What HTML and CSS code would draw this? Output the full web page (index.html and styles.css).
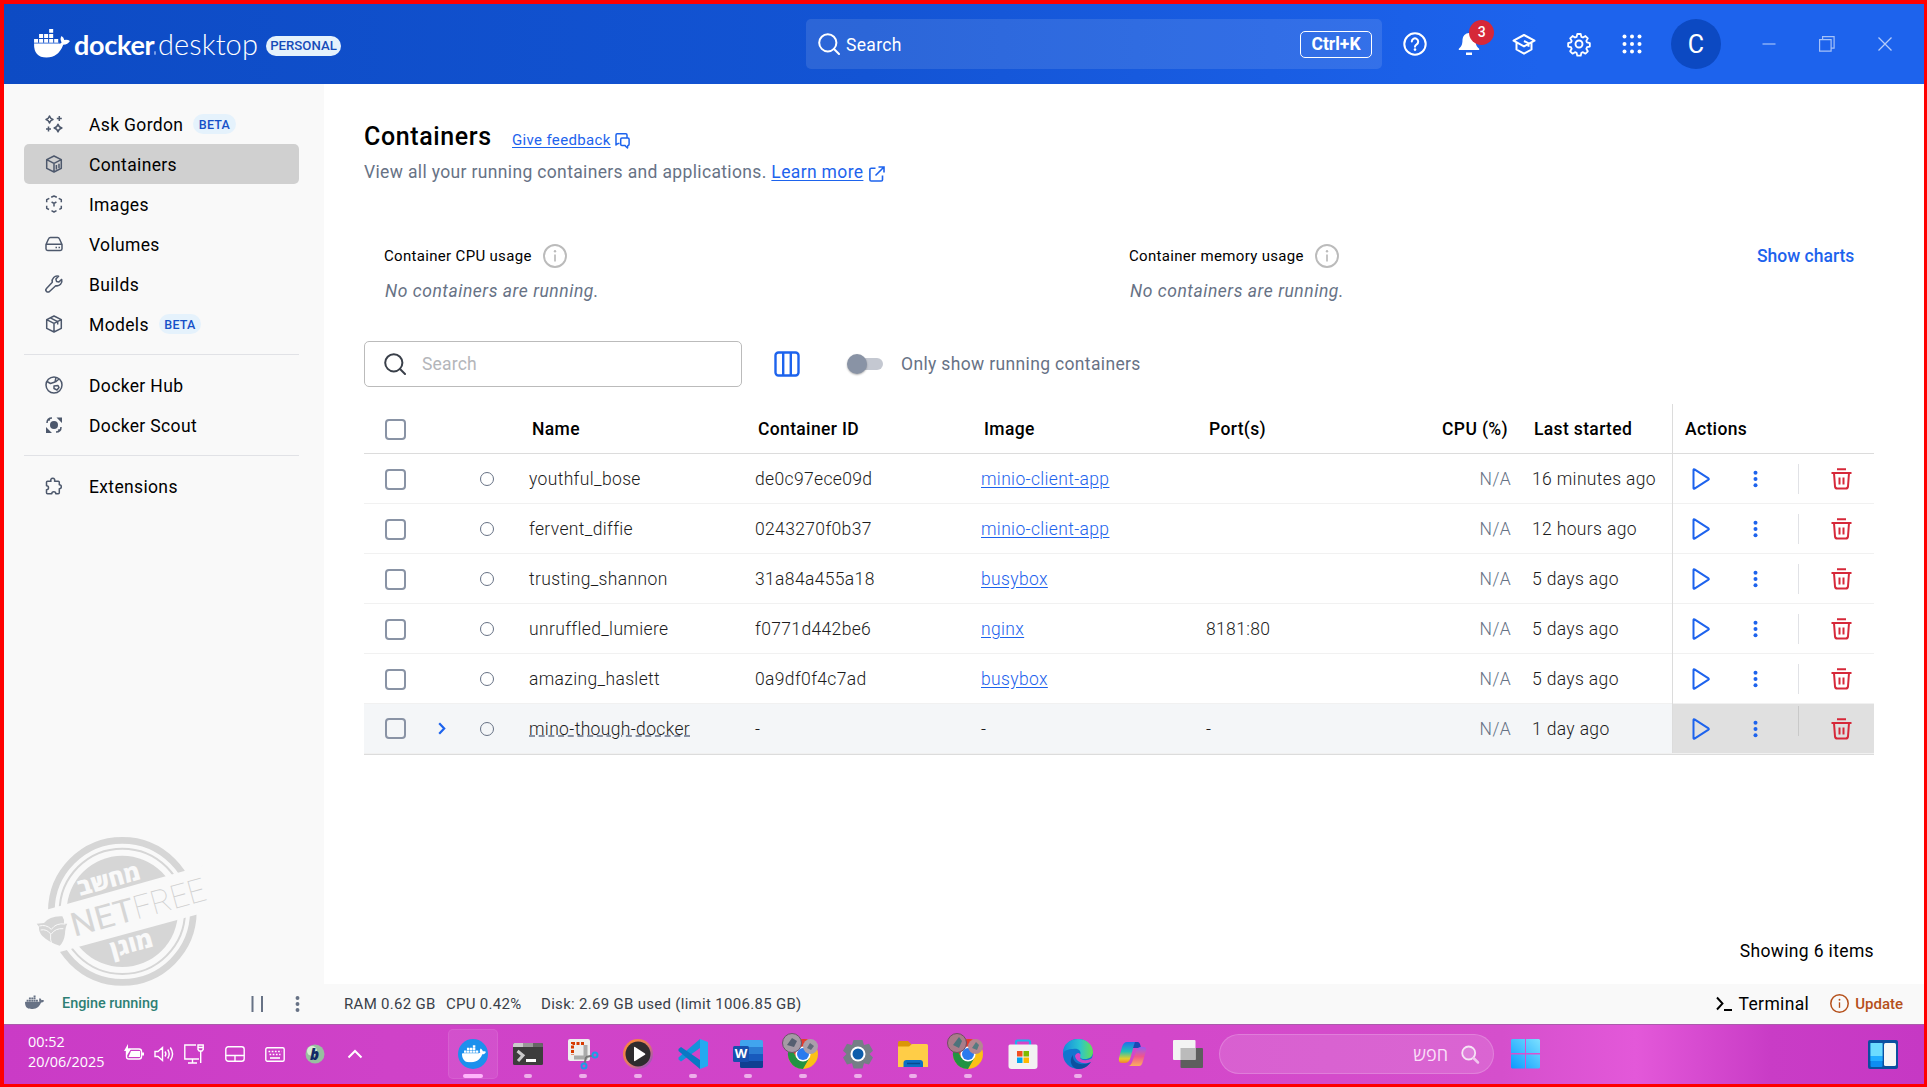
FILE: index.html
```html
<!DOCTYPE html>
<html lang="en">
<head>
<meta charset="utf-8">
<title>Docker Desktop</title>
<link rel="stylesheet" href="styles.css">
</head>
<body>
<svg class="defs" width="0" height="0">
  <defs>
    <symbol id="whale" viewBox="0 3 24 17.5"><path fill="currentColor" d="M13.983 11.078h2.119a.186.186 0 00.186-.185V9.006a.186.186 0 00-.186-.186h-2.119a.185.185 0 00-.185.185v1.888c0 .102.083.185.185.185m-2.954-5.43h2.118a.186.186 0 00.186-.186V3.574a.186.186 0 00-.186-.185h-2.118a.185.185 0 00-.185.185v1.888c0 .102.082.185.185.185m0 2.716h2.118a.187.187 0 00.186-.186V6.29a.186.186 0 00-.186-.185h-2.118a.185.185 0 00-.185.185v1.887c0 .102.082.185.185.186m-2.93 0h2.12a.186.186 0 00.184-.186V6.29a.185.185 0 00-.185-.185H8.1a.185.185 0 00-.185.185v1.887c0 .102.083.185.185.186m-2.964 0h2.119a.186.186 0 00.185-.186V6.29a.185.185 0 00-.185-.185H5.136a.186.186 0 00-.186.185v1.887c0 .102.084.185.186.186m5.893 2.715h2.118a.186.186 0 00.186-.185V9.006a.186.186 0 00-.186-.186h-2.118a.185.185 0 00-.185.185v1.888c0 .102.082.185.185.185m-2.93 0h2.12a.185.185 0 00.184-.185V9.006a.185.185 0 00-.184-.186h-2.12a.185.185 0 00-.184.185v1.888c0 .102.083.185.185.185m-2.964 0h2.119a.185.185 0 00.185-.185V9.006a.185.185 0 00-.184-.186h-2.12a.186.186 0 00-.186.186v1.887c0 .102.084.185.186.185m-2.92 0h2.12a.185.185 0 00.184-.185V9.006a.185.185 0 00-.184-.186h-2.12a.185.185 0 00-.184.185v1.888c0 .102.082.185.185.185M23.763 9.89c-.065-.051-.672-.51-1.954-.51-.338.001-.676.03-1.01.087-.248-1.7-1.653-2.53-1.716-2.566l-.344-.199-.226.327c-.284.438-.49.922-.612 1.43-.23.97-.09 1.882.403 2.661-.595.332-1.55.413-1.744.42H.751a.751.751 0 00-.75.748 11.376 11.376 0 00.692 4.062c.545 1.428 1.355 2.48 2.41 3.124 1.18.723 3.1 1.137 5.275 1.137.983.003 1.963-.086 2.93-.266a12.248 12.248 0 003.823-1.389c.98-.567 1.86-1.288 2.61-2.136 1.252-1.418 1.998-2.997 2.553-4.4h.221c1.372 0 2.215-.549 2.68-1.009.309-.293.55-.65.707-1.046l.098-.288Z"/></symbol>
    <symbol id="info" viewBox="0 0 24 24"><circle cx="12" cy="12" r="11" fill="none" stroke="currentColor" stroke-width="1.9"/><path d="M12 10.5v7" stroke="currentColor" stroke-width="1.7"/><circle cx="12" cy="7.2" r="1.2" fill="currentColor"/></symbol>
    <symbol id="search" viewBox="0 0 22 22"><circle cx="9.8" cy="9.8" r="8.6" fill="none" stroke="currentColor" stroke-width="2"/><path d="M16 16l5 5" stroke="currentColor" stroke-width="2" stroke-linecap="round"/></symbol>
    <symbol id="play" viewBox="0 0 18 22"><path d="M1.5 1.7v18.6q.2.7 1 .3l14-9q.7-.6 0-1.200l-14-9q-.8-.4-1 .3z" fill="none" stroke="currentColor" stroke-width="2" stroke-linejoin="round"/></symbol>
    <symbol id="dots" viewBox="0 0 6 20"><circle cx="3" cy="2.500" r="2.400" fill="currentColor"/><circle cx="3" cy="10" r="2.400" fill="currentColor"/><circle cx="3" cy="17.500" r="2.400" fill="currentColor"/></symbol>
    <symbol id="trash" viewBox="0 0 21 22"><path d="M6 1.200h9M.5 5h20" stroke="currentColor" stroke-width="2"/><path d="M3 5l1 13.500q.3 2 2.300 2h8.400q2 0 2.300-2L18 5M8.500 9.500v7M12.500 9.500v7" fill="none" stroke="currentColor" stroke-width="2"/></symbol>
    <symbol id="chrome" viewBox="0 0 36 36">
      <circle cx="21" cy="21" r="15" fill="#fbc116"/>
      <path d="M21 6a15 15 0 0 1 13 7.500H21z" fill="#e33b2e"/>
      <path d="M8 13.500A15 15 0 0 1 34 13.500H21l-6.500 11.200z" fill="#e33b2e"/>
      <path d="M8 13.500A15 15 0 0 0 21 36l6.500-11.300h-13z" fill="#229342"/>
      <circle cx="21" cy="21" r="7.600" fill="#fff"/><circle cx="21" cy="21" r="6" fill="#2a7bee"/>
    </symbol>
  </defs>
</svg>

<div class="screen">
  <header class="topbar">
    <svg class="logo" viewBox="102 87 107 85" width="36" height="28.500">
      <g fill="#fff"><path d="M147 87h12v11h-12zM117 102h12v12h-12zM132 102h12v12h-12zM147 102h12v12h-12zM102 117h12v11h-12zM117 117h12v11h-12zM132 117h12v11h-12zM147 117h12v11h-12zM162 117h12v11h-12z"/>
      <path d="M102 131h76q5-1 6-4-6-11 0-19 7 4 8 12 10-2 17 3-6 11-20 11-14 38-50 38-38 0-37-41z"/></g>
      <path d="M102 129.500h76" stroke="#9fbcf2" stroke-width="3"/>
    </svg>
    <span class="brand"><b>docker</b><i></i><span>desktop</span></span>
    <span class="plan">PERSONAL</span>
    <div class="global-search">
      <svg width="22" height="22"><use href="#search"/></svg>
      <span>Search</span><kbd>Ctrl+K</kbd>
    </div>
    <nav class="top-icons">
      <svg width="24" height="24" viewBox="0 0 24 24" fill="none" stroke="#fff" stroke-width="2"><circle cx="12" cy="12" r="10.700"/><path d="M8.800 9.600a3.200 3.200 0 1 1 4.900 2.700c-1.200.8-1.700 1.200-1.700 2.400" stroke-linecap="round"/><circle cx="12" cy="17.600" r="1.300" fill="#fff" stroke="none"/></svg>
      <span class="bell"><svg width="22" height="24" viewBox="0 0 22 24" fill="#fff"><path d="M11 1a6.500 6.500 0 0 1 6.500 6.500c0 5.500 1.500 7.500 3.700 9.300v1.200H.8v-1.200C3 15 4.500 13 4.500 7.500A6.500 6.500 0 0 1 11 1zM8 20.500h6v2.500H8z"/></svg><em>3</em></span>
      <svg width="24" height="24" viewBox="0 0 24 24" fill="none" stroke="#fff" stroke-width="2" stroke-linejoin="round"><path d="M1.500 8.700L12 3l10.500 5.700L12 14.400zM4.500 10.600v6.900L12 21.700l7.500-4.200v-7M12 9l4.500 2.300v3.500"/></svg>
      <svg width="24" height="24" viewBox="0 0 24 24" fill="none" stroke="#fff" stroke-width="1.900" stroke-linejoin="round"><path d="M10.200 1.500h3.600l.7 3 1.700.7 2.600-1.600 2.500 2.500-1.600 2.600.7 1.700 3 .7v3.600l-3 .7-.7 1.700 1.600 2.600-2.500 2.500-2.600-1.600-1.700.7-.7 3h-3.600l-.7-3-1.700-.7-2.600 1.600-2.500-2.500 1.600-2.600-.7-1.700-3-.7v-3.600l3-.7.7-1.700-1.600-2.600 2.500-2.500 2.600 1.600 1.700-.7z" transform="translate(.6 .6) scale(.95)"/><circle cx="12" cy="12" r="3.500"/></svg>
      <svg width="20" height="20" viewBox="0 0 20 20" fill="#fff"><circle cx="2.500" cy="2.500" r="2"/><circle cx="10" cy="2.500" r="2"/><circle cx="17.500" cy="2.500" r="2"/><circle cx="2.500" cy="10" r="2"/><circle cx="10" cy="10" r="2"/><circle cx="17.500" cy="10" r="2"/><circle cx="2.500" cy="17.500" r="2"/><circle cx="10" cy="17.500" r="2"/><circle cx="17.500" cy="17.500" r="2"/></svg>
    </nav>
    <span class="avatar">C</span>
    <div class="window-buttons">
      <svg width="14" height="16" viewBox="0 0 14 16"><path d="M.5 8h13" stroke="#a5c1f8" stroke-width="1.200"/></svg>
      <svg width="16" height="16" viewBox="0 0 16 16" fill="none" stroke="#a5c1f8" stroke-width="1.200"><path d="M.6 3.600h11.500v11.500H.6zM3.600 3.600v-3h11.500v11.500h-3"/></svg>
      <svg width="14" height="14" viewBox="0 0 14 14"><path d="M.5.5l13 13M13.500.5l-13 13" stroke="#b5ccfa" stroke-width="1.300"/></svg>
    </div>
  </header>

  <div class="body">
    <aside class="sidebar">
      <a class="item"><svg viewBox="0 0 18 18"><path d="M4.500 1Q5.300 3.700 8 4.500 5.300 5.300 4.500 8 3.700 5.300 1 4.500 3.700 3.700 4.500 1zM13 9.200q.8 3 3.900 3.800-3.100.8-3.900 3.900-.8-3.100-3.900-3.900 3.100-.8 3.900-3.800zM14.300 1v5M11.800 3.500h5M3.500 11.500v5M1 14h5"/></svg>Ask Gordon<span class="beta">BETA</span></a>
      <a class="item active"><svg viewBox="0 0 18 18"><path d="M9 1l7.300 3.700v8.600L9 17l-7.300-3.700V4.700zM1.700 4.700L9 8.400l7.300-3.700M9 8.400V17M11.400 10v4.500M14 8.700v4.500"/></svg>Containers</a>
      <a class="item"><svg viewBox="0 0 18 18"><path d="M6.200 2.300L9 1l2.800 1.300M13.700 3.300l2.600 1.400v2.600M16.300 10.700v2.600l-2 1M11.500 15.700L9 17l-2.500-1.300M4 14.500l-2.300-1.200v-2.600M1.700 7.300V4.700l2.600-1.400M6.600 7L9 8.400 11.400 7M9 8.400v3"/></svg>Images</a>
      <a class="item"><svg viewBox="0 0 18 18"><path d="M1 9.500v4.300q0 1.700 1.700 1.700h12.600q1.700 0 1.700-1.700V9.500l-2.600-5.800q-.5-1.200-1.800-1.200H5.400q-1.300 0-1.800 1.200zM1 9.300h16M10.500 12.500h1.500M13.500 12.500H15"/></svg>Volumes</a>
      <a class="item"><svg viewBox="0 0 18 18"><path d="M13.600 1.300a5 5 0 0 0-6.300 6L1.500 13.500a2 2 0 0 0 3 3l6.200-5.800a5 5 0 0 0 6-6.300l-2.800 2.600-2.400-.6-.6-2.400z"/></svg>Builds</a>
      <a class="item"><svg viewBox="0 0 18 18"><path d="M9 1l7.300 3.700v8.600L9 17l-7.300-3.700V4.700zM1.700 4.700L9 8.400l7.300-3.700M9 8.400V17M5.300 2.900l7.400 3.700v3"/></svg>Models<span class="beta">BETA</span></a>
      <hr>
      <a class="item"><svg viewBox="0 0 18 18"><circle cx="9" cy="9" r="8"/><path d="M2 5.500l3.500 2L10 6l1-4.500M9 10l4-.5 1 2-2 2.500-3-1.500zM10.500 6L14 3"/></svg>Docker Hub</a>
      <a class="item"><svg viewBox="0 0 18 18"><circle cx="9" cy="9" r="4" fill="#4d586c" stroke="none"/><path d="M11.500 1.500H17V7zM1 11v6h6z" fill="#4d586c" stroke="none"/><path d="M2 7q0-5 5-5M16 11q0 5-5 5M3.500 4.500l1.500-1M14.500 13.500l-1.500 1"/></svg>Docker Scout</a>
      <hr>
      <a class="item"><svg viewBox="0 0 18 18"><path d="M6 4.200A2 2 0 1 1 9.500 4.200h3.800q1 0 1 1v2.500a2 2 0 1 1 0 4v4q0 1-1 1h-2.500a2 2 0 0 0-4 0H2.500q-1 0-1-1v-3a2 2 0 0 0 0-4V5.200q0-1 1-1z"/></svg>Extensions</a>
    </aside>

    <main class="main">
      <div class="title"><h1>Containers</h1><a class="link">Give feedback</a>
        <svg width="15" height="16" viewBox="0 0 15 16" fill="none" stroke="#1d63ed" stroke-width="1.500" stroke-linejoin="round"><path d="M4.500 10.500H3L1 12V2q0-1.200 1.200-1.200h8.600Q12 .8 12 2v2.500M5.700 6.200q0-1.200 1.200-1.200h6q1.200 0 1.200 1.200v5q0 1.200-1.200 1.200L12.500 15l-2.700-2.600H6.900q-1.200 0-1.200-1.200z"/></svg></div>
      <div class="subtitle">View all your running containers and applications. <a class="link">Learn more</a>
        <svg width="16" height="16" viewBox="0 0 16 16" fill="none" stroke="#1d63ed" stroke-width="1.600"><path d="M6.500 2.200H2.200Q.9 2.200.9 3.500v10.200q0 1.300 1.300 1.300h10q1.300 0 1.300-1.300V9.500M9.500 1h5.500v5.500M15 1L6.500 9.500"/></svg></div>

      <div class="stats">
        <div class="stat"><div class="stat-head">Container CPU usage<svg width="24" height="24"><use href="#info"/></svg></div><p>No containers are running.</p></div>
        <div class="stat"><div class="stat-head">Container memory usage<svg width="24" height="24"><use href="#info"/></svg></div><p>No containers are running.</p></div>
        <a class="charts">Show charts</a>
      </div>

      <div class="toolbar">
        <div class="filter"><svg width="22" height="22"><use href="#search"/></svg><span>Search</span></div>
        <svg class="columns" width="26" height="26" viewBox="0 0 26 26" fill="none" stroke="#1d63ed" stroke-width="2.400"><rect x="1.500" y="1.500" width="23" height="23" rx="3"/><path d="M9.200 1.500v23M16.800 1.500v23"/></svg>
        <span class="switch"><i></i></span>
        <span>Only show running containers</span>
      </div>

      <div class="table">
        <div class="row head"><i class="check"></i><span></span><span></span><span>Name</span><span>Container ID</span><span>Image</span><span>Port(s)</span><span class="num">CPU (%)</span><span class="last">Last started</span><span class="act">Actions</span></div>
        <div class="row"><i class="check"></i><span></span><i class="status"></i><span>youthful_bose</span><span>de0c97ece09d</span><a>minio-client-app</a><span></span><span class="num">N/A</span><span class="last">16 minutes ago</span><span class="act"><svg class="play"><use href="#play"/></svg><svg class="dots"><use href="#dots"/></svg><i></i><svg class="trash"><use href="#trash"/></svg></span></div>
        <div class="row"><i class="check"></i><span></span><i class="status"></i><span>fervent_diffie</span><span>0243270f0b37</span><a>minio-client-app</a><span></span><span class="num">N/A</span><span class="last">12 hours ago</span><span class="act"><svg class="play"><use href="#play"/></svg><svg class="dots"><use href="#dots"/></svg><i></i><svg class="trash"><use href="#trash"/></svg></span></div>
        <div class="row"><i class="check"></i><span></span><i class="status"></i><span>trusting_shannon</span><span>31a84a455a18</span><a>busybox</a><span></span><span class="num">N/A</span><span class="last">5 days ago</span><span class="act"><svg class="play"><use href="#play"/></svg><svg class="dots"><use href="#dots"/></svg><i></i><svg class="trash"><use href="#trash"/></svg></span></div>
        <div class="row"><i class="check"></i><span></span><i class="status"></i><span>unruffled_lumiere</span><span>f0771d442be6</span><a>nginx</a><span>8181:80</span><span class="num">N/A</span><span class="last">5 days ago</span><span class="act"><svg class="play"><use href="#play"/></svg><svg class="dots"><use href="#dots"/></svg><i></i><svg class="trash"><use href="#trash"/></svg></span></div>
        <div class="row"><i class="check"></i><span></span><i class="status"></i><span>amazing_haslett</span><span>0a9df0f4c7ad</span><a>busybox</a><span></span><span class="num">N/A</span><span class="last">5 days ago</span><span class="act"><svg class="play"><use href="#play"/></svg><svg class="dots"><use href="#dots"/></svg><i></i><svg class="trash"><use href="#trash"/></svg></span></div>
        <div class="row group"><i class="check"></i><svg width="8" height="13" viewBox="0 0 8 13"><path d="M1.200 1.200l5 5.300-5 5.300" fill="none" stroke="#1d63ed" stroke-width="2.200"/></svg><i class="status"></i><span class="project">mino-though-docker</span><span>-</span><span>-</span><span>-</span><span class="num">N/A</span><span class="last">1 day ago</span><span class="act"><svg class="play"><use href="#play"/></svg><svg class="dots"><use href="#dots"/></svg><i></i><svg class="trash"><use href="#trash"/></svg></span></div>
      </div>
      <div class="count">Showing 6 items</div>
    </main>

    <svg class="stamp" viewBox="105 45 525 455" width="175" height="151.700">
      <circle cx="367" cy="274" r="213" fill="none" stroke="#d6d6d6" stroke-width="20"/>
      <circle cx="367" cy="274" r="188" fill="none" stroke="#d6d6d6" stroke-width="6"/>
      <circle cx="367" cy="274" r="167" fill="#d6d6d6"/>
      <path d="M105 279L630 131v142L105 416z" fill="#f9f9f9"/>
      <g transform="rotate(-15.500 367 274)">
        <text x="353" y="196" text-anchor="middle" textLength="192" lengthAdjust="spacingAndGlyphs" class="stamp-he">מחשב</text>
        <text x="367" y="400" text-anchor="middle" textLength="130" lengthAdjust="spacingAndGlyphs" class="stamp-he">מוגן</text>
        <text x="208" y="309" textLength="194" lengthAdjust="spacingAndGlyphs" class="stamp-net">NET</text>
        <text x="402" y="309" textLength="222" lengthAdjust="spacingAndGlyphs" class="stamp-free">FREE</text>
      </g>
      <path d="M110 311l22-2q18-22 55-20 7 10 5 22h10q-6 10-7 30-3 24-16 36-31-9-52-29-12-14-10-28z" fill="#d6d6d6"/>
      <path d="M118 318q20-6 36 10 14-20 42-16M122 330q18-4 30 12-2 16 3 30M154 342q12-18 36-16" fill="none" stroke="#f9f9f9" stroke-width="3"/>
    </svg>
  </div>

  <footer class="statusbar">
    <div class="engine"><svg class="whale" width="19" height="16"><use href="#whale"/></svg><span>Engine running</span>
      <svg class="pause" width="13" height="16" viewBox="0 0 13 16"><path d="M1.500 0v16M11 0v16" stroke="#677285" stroke-width="2"/></svg>
      <svg class="more" width="5" height="16"><use href="#dots"/></svg></div>
    <span class="ram">RAM 0.62 GB</span><span class="cpu">CPU 0.42%</span><span>Disk: 2.69 GB used (limit 1006.85 GB)</span>
    <span class="terminal"><svg width="16" height="16" viewBox="0 0 16 16" fill="none" stroke="#000" stroke-width="1.900"><path d="M1 1.500l5.500 6L1 13.500M8 14h8"/></svg>Terminal</span>
    <span class="update"><svg width="19" height="19"><use href="#info"/></svg>Update</span>
  </footer>

  <div class="taskbar">
    <div class="clock">00:52<br>20/06/2025</div>
    <div class="tray">
      <svg width="20" height="20" viewBox="0 0 20 20"><path d="M2.500 7.500q0-2.500 2.500-2.500h10q2.500 0 2.500 2.500v5q0 2.500-2.500 2.500H5q-2.500 0-2.500-2.500z" fill="none" stroke="#fff" stroke-width="1.400"/><path d="M7 7h9v6H4.500zM18 8.500h2v3h-2zM4 0L0 7h3l-1 6 5-8H4z" fill="#fff"/></svg>
      <svg width="20" height="16" viewBox="0 0 20 16" fill="none" stroke="#fff" stroke-width="1.400"><path d="M1 5.500h3L8.500 1.500v13L4 10.500H1zM11 5.500q1.800 2.500 0 5M13.700 3.500q3 4.500 0 9M16.300 1.500q4.500 6.500 0 13"/></svg>
      <svg width="20" height="20" viewBox="0 0 20 20" fill="none" stroke="#fff" stroke-width="1.400"><path d="M12 1H.8v14H15M4 19h9M8.500 15v4M14 1h5.200v4.500l-1.200 1.500h-2.800L14 5.500zM16.700 7v12M14 3.500h5"/></svg>
      <svg class="pad" width="20" height="16" viewBox="0 0 20 16" fill="none" stroke="#fff" stroke-width="1.400"><rect x=".8" y=".8" width="18.400" height="14.400" rx="2.500"/><path d="M.8 9.500h18.400M10 9.500v5.500"/></svg>
      <svg class="keys" width="20" height="15" viewBox="0 0 20 15" fill="none" stroke="#fff"><rect x=".8" y=".8" width="18.400" height="13.400" rx="1.500" stroke-width="1.400"/><path d="M3.500 4.500h13M4.500 7.500h11" stroke-width="1.700" stroke-dasharray="1.700 1.500"/><path d="M5 11h10" stroke-width="1.600"/></svg>
      <svg class="bee" width="20" height="20" viewBox="0 0 20 20"><circle cx="10" cy="10" r="9.500" fill="#98bfa0"/><circle cx="7" cy="7" r="5" fill="#d5eed2"/><text x="5" y="16" class="b">b</text></svg>
      <svg class="up" width="16" height="10" viewBox="0 0 16 10"><path d="M1.500 8.500L8 2l6.500 6.500" fill="none" stroke="#fff" stroke-width="2"/></svg>
    </div>
    <div class="apps">
      <span class="app current"><svg viewBox="0 0 30 30"><circle cx="15" cy="15" r="15" fill="#1c90ed"/><svg x="4" y="5.500" width="24" height="18" color="#fff"><use href="#whale"/></svg></svg></span>
      <span class="app open"><svg viewBox="0 0 30 30"><rect y="4" width="30" height="22" rx="1.500" fill="#3d3d3d"/><path d="M0 8V5.500Q0 4 1.500 4H10v4z" fill="#ccc"/><path d="M10 4h10v4H10z" fill="#999"/><path d="M20 4h8.500Q30 4 30 5.500V8H20z" fill="#666"/><path d="M4.500 12l5.500 4.500L5 22" fill="none" stroke="#ccc" stroke-width="3"/><path d="M13 20h10v3H13z" fill="#fff"/></svg></span>
      <span class="app open"><svg viewBox="0 0 30 30"><rect width="22" height="22" rx="2" fill="#eee"/><path d="M16 4.500H4.500V16" fill="none" stroke="#d83b01" stroke-width="3" stroke-dasharray="3 1.500"/><path d="M17.500 6v12.500H6" fill="none" stroke="#aaa" stroke-width="4"/><path d="M18 18l7-1.500M18 18l-1.500 7" stroke="#777" stroke-width="2"/><circle cx="27" cy="16" r="2.500" fill="none" stroke="#1c9ce5" stroke-width="2"/><circle cx="16" cy="27" r="2.500" fill="none" stroke="#1c9ce5" stroke-width="2"/></svg></span>
      <span class="app open"><svg viewBox="0 0 30 30"><defs><linearGradient id="mp" x1="0" y1="0" x2="1" y2="1"><stop offset="0" stop-color="#ff8c2e"/><stop offset=".5" stop-color="#e27b63"/><stop offset="1" stop-color="#8348d8"/></linearGradient></defs><circle cx="15" cy="15" r="15" fill="url(#mp)"/><circle cx="15" cy="15" r="12.500" fill="#2e2c2e"/><path d="M11 8.500v13q0 1 1 .5l10-6.200q.8-.8 0-1.400L12 8q-1-.5-1 .5z" fill="#fff"/></svg></span>
      <span class="app open"><svg viewBox="0 0 30 30"><path d="M22 0l8 3v24l-8 3z" fill="#25a9f0"/><path d="M22 0v9L3 22.500.5 20.500v-2z" fill="#1493db"/><path d="M22 30v-9L3 8 .5 10v2z" fill="#0a78c4"/></svg></span>
      <span class="app open"><svg viewBox="0 0 30 30"><path d="M7 2.500Q7 1 8.500 1h20Q30 1 30 2.500V8H7z" fill="#41a5ee"/><path d="M7 8h23v7H7z" fill="#2b7cd3"/><path d="M7 15h23v7H7z" fill="#185abd"/><path d="M7 22h23v5.500q0 1.500-1.500 1.500h-20Q7 29 7 27.500z" fill="#103f91"/><rect y="7" width="16" height="16" rx="1.500" fill="#174fae"/><text x="1.700" y="19" class="w">W</text></svg></span>
      <span class="app open wide"><svg viewBox="0 0 36 36"><use href="#chrome" width="36" height="36"/><circle cx="10" cy="10" r="9.500" fill="#a59aa5" stroke="#6b5368"/><path d="M5 12l5-7 5 3-3 6z" fill="#565e70"/><circle cx="28.500" cy="13.500" r="7.500" fill="#aaa0aa"/><path d="M25 15l3-5 4 3-3 4z" fill="#626b7a"/></svg></span>
      <span class="app open"><svg viewBox="0 0 30 30"><path d="M10.500 1h9l1.500 5 5-1.200 4 7L26.500 15l3.500 3.500-4 7-5-1.300-1.500 5.300h-9L9 24.200l-5 1.300-4-7L3.500 15 0 11.800l4-7L9 6z" fill="#757e86"/><circle cx="15" cy="15" r="7.500" fill="#fff"/><circle cx="15" cy="15" r="5.500" fill="#0d5dab"/></svg></span>
      <span class="app open"><svg viewBox="0 0 30 30"><path d="M0 3.500Q0 2 1.500 2H10l3 3v6H0z" fill="#db9608"/><path d="M0 7.500h11L14 5h14.500Q30 5 30 6.500V28H0z" fill="#ffcd47"/><path d="M5.500 28v-4q0-3 3-3H22q3 0 3 3v4z" fill="#0b6fc6"/><path d="M9 24.500h13" stroke="#064a8e" stroke-width="1.500"/></svg></span>
      <span class="app open wide"><svg viewBox="0 0 36 36"><use href="#chrome" width="36" height="36"/><circle cx="10" cy="10" r="9.500" fill="#a97c89" stroke="#704d62"/><path d="M6 12l6-8 3 4-3 7z" fill="#4c737b"/><circle cx="28.500" cy="13.500" r="7.500" fill="#b58791"/><path d="M25 15l4-6 3 3-2 5z" fill="#557a80"/></svg></span>
      <span class="app"><svg viewBox="0 0 30 30"><path d="M8 8V3q0-1.500 1.500-1.500h11Q22 1.500 22 3v5" fill="none" stroke="#1db2ed" stroke-width="2.200"/><path d="M.5 7Q.5 5.500 2 5.500h26q1.500 0 1.500 1.500v20q0 3-3 3h-23q-3 0-3-3z" fill="#f2f2f2"/><path d="M9 12h5.500v5.500H9z" fill="#f25022"/><path d="M15.500 12H21v5.500h-5.500z" fill="#7fba00"/><path d="M9 18.500h5.500V24H9z" fill="#00a4ef"/><path d="M15.500 18.500H21V24h-5.500z" fill="#ffb900"/></svg></span>
      <span class="app open"><svg viewBox="0 0 30 30"><defs><linearGradient id="eg" x1="0" x2="1"><stop offset="0" stop-color="#1689dd"/><stop offset=".55" stop-color="#2bc3d2"/><stop offset="1" stop-color="#65e052"/></linearGradient></defs><circle cx="15" cy="15" r="15" fill="#1176cf"/><path d="M0 14C0 5 7 0 15 0c9 0 15 6 15 13 0 5-4 7-8 7-5 0-6-2-5-4 2-4-2-7-7-6-5 0-9 2-10 4z" fill="url(#eg)"/><path d="M10 16c-1 8 8 12 18 7-3 4-7 7-12 7C9 30 5 22 10 16z" fill="#0c50a0"/><path d="M17 15c1 1 0 2 0 4 2 3 8 3 12 0l1-3v8l-2.500-1C21 26 13 23 12 17c1-3 4-4 5-2z" fill="#d146c8"/></svg></span>
      <span class="app"><svg viewBox="0 0 30 30"><defs><linearGradient id="ca" x1="0" y1="0" x2="0" y2="1"><stop offset="0" stop-color="#2170ea"/><stop offset=".45" stop-color="#1fc0b8"/><stop offset=".8" stop-color="#e8cd2a"/><stop offset="1" stop-color="#f08032"/></linearGradient><linearGradient id="cb" x1="0" y1="0" x2="0" y2="1"><stop offset="0" stop-color="#9a5bf0"/><stop offset=".5" stop-color="#f0568e"/><stop offset="1" stop-color="#fbb15d"/></linearGradient></defs><path d="M9 3h11q-3 0-4.500 5L12 20q-1.500 4-5 4H4q-4 0-3-5L4 8q1.500-5 5-5z" fill="url(#ca)"/><path d="M17 3h3q2 0 3 6h-8z" fill="#1b48b5"/><path d="M21 27H10q3 0 4.500-5L18 12q1.500-4 5-4h2q4 0 3 4l-3 10q-1 5-4 5z" fill="url(#cb)"/></svg></span>
      <span class="app"><svg viewBox="0 0 30 30"><rect x="7.500" y="9" width="22.500" height="20" rx="1" fill="#5e5e5e"/><rect y="1" width="22.500" height="20" rx="1" fill="#f3f3f3"/><path d="M7.500 9h15v12h-15z" fill="#bbb"/></svg></span>
    </div>
    <div class="os-search"><span>חפש</span><svg width="19" height="19" viewBox="0 0 19 19"><circle cx="7.700" cy="8" r="6.500" fill="#de7fda" stroke="#f6e4f5" stroke-width="1.800"/><path d="M12.500 13l4.500 4.500" stroke="#f1c8ee" stroke-width="2.500" stroke-linecap="round"/></svg></div>
    <svg class="start" width="29" height="30" viewBox="0 0 29 30"><defs><linearGradient id="st" x1="1" y1="0" x2="0" y2="1"><stop offset="0" stop-color="#7be0ff"/><stop offset="1" stop-color="#0a9bff"/></linearGradient></defs><path d="M1 0h13v14H0V1zM15 0h13l1 1v13H15zM0 15.500h14v14H1l-1-1zM15 15.500h14v13l-1 1H15z" fill="url(#st)"/></svg>
    <svg class="widgets" width="30" height="29" viewBox="0 0 30 29"><rect width="30" height="29" rx="2" fill="#0b4fa0"/><rect x="2.500" y="3" width="12" height="24" rx="1" fill="#0d8df2"/><path d="M2.500 3h12v13h-12z" fill="#6cdcff"/><path d="M2.500 16h12v5h-12z" fill="#22aeff"/><rect x="16" y="3" width="12" height="23" rx="1.500" fill="#f6f6f6"/></svg>
  </div>
</div>
</body>
</html>
```
FILE: styles.css
```css
* { box-sizing: border-box; }
body { margin: 0; font-family: Roboto, "Liberation Sans", sans-serif; font-size: 17.5px; letter-spacing: .35px; color: #000; }
svg { display: block; flex: none; overflow: visible; }
svg text { letter-spacing: 0; }
i, em { font-style: normal; }
.defs { position: absolute; }
.screen { width: 1927px; height: 1087px; border: solid #f00; border-width: 4px 3px 3px 4px; display: flex; flex-direction: column; overflow: hidden; background: #fff; }

/* Title bar */
.topbar { height: 80px; flex: none; display: flex; align-items: center; padding-left: 30px; background: linear-gradient(90deg, #0d4bc4, #1354d4 45%, #1d63ed 80%); color: #fff; }
.logo { margin-top: -2px; }
.brand { display: flex; width: 184px; margin-left: 4px; align-items: baseline; font: 400 27px/40px Lato, sans-serif; letter-spacing: 0; white-space: nowrap; }
.brand b { font-weight: 700; width: 82px; letter-spacing: -.3px; }
.brand i { width: 4px; height: 4px; border-radius: 50%; background: #7ea2ea; margin-right: 2px; margin-left: 0; }
.brand span { font-weight: 300; font-size: 29px; letter-spacing: .1px; }
.plan { margin: 4px 0 0 8px; width: 75px; height: 20px; border-radius: 10px; background: #e5f2fc; color: #164bb8; font: 500 13.2px/20px Roboto, sans-serif; letter-spacing: 0; text-align: center; }
.global-search { margin-left: 465px; width: 576px; height: 50px; border-radius: 5px; background: rgba(255, 255, 255, .11); display: flex; align-items: center; padding: 0 10px 0 12px; }
.global-search span { margin: 1px 0 0 6px; }
.global-search kbd { margin: 1px 0 0 auto; width: 72px; height: 27px; border: 1.5px solid #fff; border-radius: 5px; font: 700 17.5px/25px Roboto, sans-serif; letter-spacing: 0; text-align: center; }
.top-icons { display: flex; align-items: center; margin-left: 21px; width: 239px; justify-content: space-between; }
.bell { position: relative; }
.bell em { position: absolute; left: 11px; top: -12px; width: 25px; height: 25px; border-radius: 50%; background: #d62839; font: 500 14px/25px Roboto, sans-serif; letter-spacing: 0; text-align: center; }
.avatar { margin-left: 29px; width: 50px; height: 50px; border-radius: 50%; background: #0c49c2; font: 400 25px/51px Roboto, sans-serif; letter-spacing: 0; text-align: center; }
.window-buttons { margin-left: 41px; display: flex; align-items: center; gap: 43px; }

/* Sidebar */
.body { flex: none; height: 900px; display: flex; position: relative; }
.sidebar { width: 320px; flex: none; background: #f9f9f9; padding: 20px 25px 0 20px; }
.item { display: flex; align-items: center; height: 40px; padding: 2px 0 0 21px; border-radius: 5px; }
.item svg { width: 18px; height: 18px; margin: -2px 26px 0 0; fill: none; stroke: #4d586c; stroke-width: 1.5; stroke-linejoin: round; }
.item.active { background: #d0d0d0; }
.beta { margin: -2px 0 0 10px; height: 20px; border-radius: 10px; padding: 0 5.5px; background: #e5f2fc; color: #1650c8; font: 500 12.5px/21px Roboto, sans-serif; letter-spacing: .2px; }
.sidebar hr { margin: 10px 0; border: 0; height: 1px; background: #e1e2e6; }
.stamp { position: absolute; left: 31px; top: 751px; }
.stamp-he { font: 800 70px "Open Sans", "DejaVu Sans", sans-serif; fill: #f9f9f9; }
.stamp-net { font: 400 98px Roboto, sans-serif; fill: #d6d6d6; }
.stamp-free { font: 100 98px Roboto, sans-serif; fill: #d0d0d0; }

/* Containers page */
.main { flex: 1; padding: 27px 50px 18px 40px; display: flex; flex-direction: column; }
.link { color: #1d63ed; text-decoration: underline; text-underline-offset: 2px; }
.title { display: flex; height: 50px; align-items: center; }
.title h1 { margin: 0; font-size: 25px; font-weight: 500; letter-spacing: .6px; width: 148px; }
.title .link { font-size: 15px; margin: 7px 4px 0 0; }
.title svg { margin-top: 10px; }
.subtitle { display: flex; height: 22px; align-items: center; color: #677285; white-space: pre; }
.subtitle svg { margin: 3px 0 0 6px; }
.stats { display: flex; margin-top: 58px; padding-left: 20px; height: 60px; }
.stat { width: 745px; }
.stat-head { display: flex; align-items: center; gap: 11px; height: 30px; font-size: 15px; letter-spacing: .32px; }
.stat-head svg { color: #bbb; }
.stat p { margin: 10px 0 0 1px; font-style: italic; line-height: 20px; color: #677285; letter-spacing: .55px; }
.charts { margin-left: -117px; line-height: 30px; color: #1d63ed; font-weight: 500; letter-spacing: 0; white-space: nowrap; }
.toolbar { display: flex; align-items: center; margin-top: 40px; height: 46px; color: #677285; }
.filter { width: 378px; height: 46px; border: 1px solid #bbb; border-radius: 5px; display: flex; align-items: center; padding-left: 19px; gap: 16px; color: #b4b6ba; letter-spacing: .2px; }
.filter svg { color: #393f49; }
.columns { margin: 0 47px 0 32px; }
.switch { width: 36px; height: 20px; display: flex; align-items: center; margin-right: 18px; }
.switch::after { content: ""; width: 26px; height: 12px; margin-left: -10px; border-radius: 0 6px 6px 0; background: #c4c8d1; }
.switch i { width: 20px; height: 20px; border-radius: 50%; background: #8993a5; z-index: 1; box-shadow: 0 1px 2px rgba(0, 0, 0, .3); }

/* Container table */
.table { margin-top: 17px; border-bottom: 1px solid #dcdcdc; }
.row { display: grid; grid-template-columns: 74px 42px 49px 226px 226px 225px 205px 100px 161px 202px; height: 50px; align-items: center; border-bottom: 1px solid #f1f1f1; font-weight: 300; color: #1c1c1c; }
.row a { color: #1d63ed; text-decoration: underline; text-underline-offset: 2px; }
.row.head { font-weight: 500; color: #000; border-color: #dcdcdc; }
.row.head > span { padding-left: 3px; }
.check { width: 21px; height: 21px; margin-left: 21px; border: 2px solid #8993a5; border-radius: 4px; }
.status { width: 14px; height: 14px; border: 1.5px solid #677285; border-radius: 50%; }
.num { text-align: right; color: #677285; }
.row.head .num { padding-right: 3px; color: #000; }
.row .last { padding-left: 21px; }
.row.head > .last { padding-left: 23px; }
.act { height: 50px; display: flex; align-items: center; border-left: 1px solid #dcdcdc; color: #1d63ed; }
.row.head > .act { color: #000; padding-left: 12px; }
.act .play { width: 18px; height: 22px; margin-left: 19px; }
.act .dots { width: 5px; height: 20px; margin-left: 43px; }
.act i { width: 1px; height: 30px; margin: 0 32px 0 40px; background: #e1e2e6; }
.act .trash { width: 21px; height: 22px; color: #d62839; }
.row.group { background: #f4f6f8; }
.group .act { height: 49px; background: #e0e0e0; }
.group .act i { margin-top: -15px; background: #c9c9c9; }
.project { text-decoration: underline dashed #8993a5 1.5px; text-underline-offset: 1px; }
.count { margin-top: auto; line-height: 30px; text-align: right; }

/* Status bar */
.statusbar { flex: none; height: 40px; display: flex; align-items: center; padding-bottom: 1px; background: #f9f9f9; font-size: 15px; letter-spacing: .3px; color: #393f49; white-space: pre; }
.engine { width: 340px; display: flex; align-items: center; padding-left: 21px; color: #2e7f74; font-weight: 500; font-size: 14.4px; letter-spacing: 0; }
.whale { color: #677285; margin: -4px 18px 0 0; }
.pause { margin-left: 93px; }
.more { color: #677285; margin-left: 31px; }
.ram { width: 102px; }
.cpu { width: 95px; }
.terminal { margin-left: auto; display: flex; align-items: center; gap: 7px; color: #000; font-size: 17.5px; letter-spacing: .35px; }
.update { display: flex; align-items: center; gap: 6px; margin: 0 21px 0 21px; color: #b5501b; font-weight: 500; letter-spacing: 0; }

/* Windows taskbar */
.taskbar { flex: none; height: 60px; display: flex; align-items: center; padding-bottom: 1px; background: linear-gradient(90deg, #ca3bc6, #cf42c8 20%, #d347ca 60%, #d54fcc 78%, #e358d9 85%, #c93cc6 92%, #c638c4); border-top: 1px solid #ab5aab; }
.clock { width: 97px; padding: 0 0 4px 24px; color: #fff; font: 400 14.4px/20px "Open Sans", sans-serif; letter-spacing: 0; flex: none; }
.tray { display: flex; align-items: center; gap: 10px; margin-left: 23px; width: 324px; }
.pad { margin-left: 11px; }
.keys { margin-left: 10px; }
.bee { margin-left: 10px; }
.up { margin-left: 12px; }
.b { font: italic 800 15px "Open Sans", sans-serif; fill: #102a66; }
.w { font: 700 13px "Open Sans", sans-serif; fill: #fff; }
.apps { display: flex; gap: 5px; }
.app { width: 50px; height: 50px; display: flex; justify-content: center; align-items: center; border-radius: 5px; position: relative; }
.app svg { width: 30px; height: 30px; }
.app svg svg { width: 24px; height: 18px; }
.app.wide > svg { width: 36px; height: 36px; margin: -6px 0 0 -6px; }
.current { background: rgba(255, 255, 255, .08); border: 1px solid rgba(255, 255, 255, .08); }
.open::after, .current::after { content: ""; position: absolute; bottom: 1px; left: 21px; width: 8px; height: 4px; border-radius: 2px; background: #eeaeea; }
.current::after { left: 14px; bottom: 0; width: 20px; background: #ffb5fb; }
.os-search { width: 275px; height: 40px; margin-left: 6px; border: 1px solid rgba(255, 255, 255, .18); border-radius: 20px; background: rgba(255, 255, 255, .13); display: flex; align-items: center; justify-content: flex-end; gap: 13px; padding-right: 13px; color: #fadff8; font: 400 18px "Open Sans", "DejaVu Sans", sans-serif; letter-spacing: 0; }
.start { margin-left: 17px; }
.widgets { margin-left: auto; margin-right: 26px; }
```
